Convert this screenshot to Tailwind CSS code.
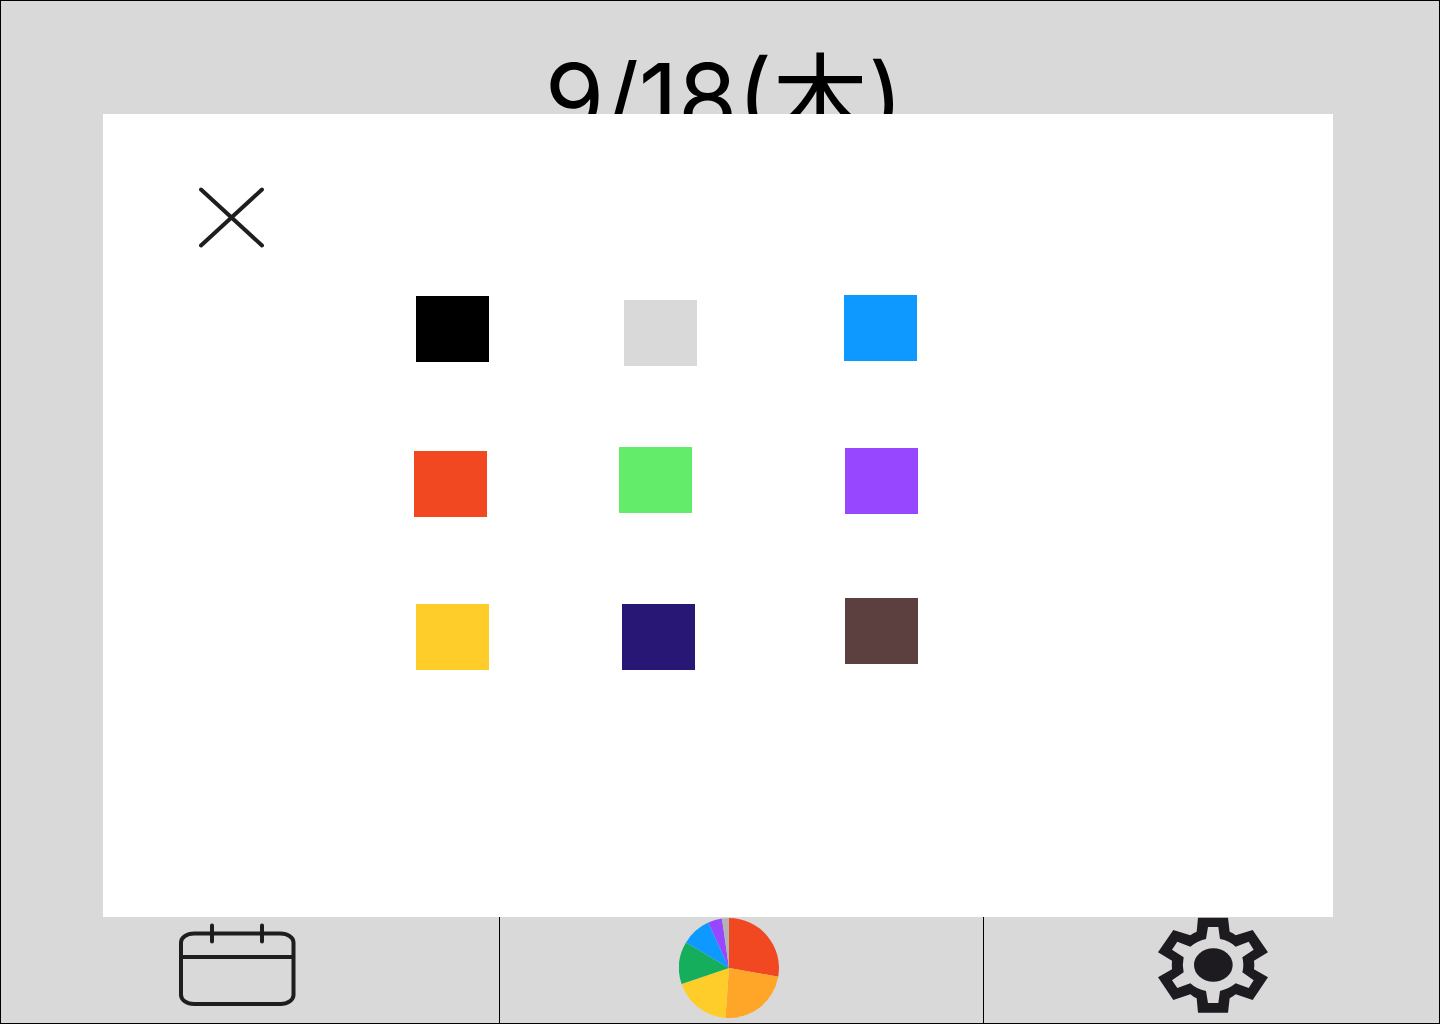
<!DOCTYPE html>
<html lang="ja">
<head>
<meta charset="utf-8">
<meta name="viewport" content="width=device-width, initial-scale=1">
<title>9/18(木)</title>
<script src="https://cdn.jsdelivr.net/npm/@tailwindcss/browser@4"></script>
</head>
<body class="font-['Inter','Noto_Sans_CJK_JP',sans-serif]">
<div class="relative flex min-h-screen flex-col border border-black bg-[#d9d9d9] text-black">
  <header class="flex justify-center pt-[49px] pl-2">
    <h1 class="text-8xl leading-none">9/18(木)</h1>
  </header>

  <nav class="mt-auto grid h-30 grid-cols-[499fr_484fr_455fr]">
    <a href="#calendar" aria-label="カレンダー" class="flex items-end justify-center border-r border-black pr-[26px] pb-4">
      <svg class="h-[84px] w-[118px]" viewBox="0 0 118 84" fill="none" stroke="#1e1e1e" stroke-width="4" stroke-linecap="round">
        <rect x="3" y="10.500" width="112.500" height="70.500" rx="13" ry="9"/>
        <path d="M3 34H115M34 2.500V18.500M84 2.500V18.500"/>
      </svg>
    </a>
    <a href="#chart" aria-label="グラフ" class="flex items-end justify-center border-r border-black pr-[26px] pb-[5px]">
      <svg class="size-[100px]" viewBox="0 0 100 100">
        <path fill="#f24822" d="M50 50V0A50 50 0 0 1 99.200 58.700Z"/>
        <path fill="#ffa629" d="M50 50L99.200 58.700A50 50 0 0 1 46.500 99.900Z"/>
        <path fill="#ffcd29" d="M50 50L46.500 99.900A50 50 0 0 1 2.600 66Z"/>
        <path fill="#14ae5c" d="M50 50L2.600 66A50 50 0 0 1 7 24.400Z"/>
        <path fill="#0d99ff" d="M50 50L7 24.400A50 50 0 0 1 29.300 4.500Z"/>
        <path fill="#9747ff" d="M50 50L29.300 4.500A50 50 0 0 1 43 .5Z"/>
        <path fill="#b3b3b3" d="M50 50L43 .5A50 50 0 0 1 50 0Z"/>
      </svg>
    </a>
    <a href="#settings" aria-label="設定" class="flex items-end justify-center pb-[10px] pl-0.5">
      <svg class="h-24 w-28" viewBox="36 36 336 288" fill="#1d1b20">
        <path fill-rule="evenodd" d="M159 38H249L254 80Q264 84 272 91L323 75L369 142L327 167Q329 180 327 193L369 217L323 285L272 268Q264 275 254 280L249 323H159L155 280Q145 276 136 268L85 285L39 217L81 193Q80 180 81 167L39 142L85 75L136 91Q145 84 155 80ZM189 66L183 102Q155 109 136 125L97 110L81 134L116 157Q111 180 116 202L81 226L97 249L136 235Q155 253 183 258L189 294H220L225 258Q253 251 272 235L311 249L326 226L292 202Q298 180 292 157L326 134L311 110L272 125Q253 107 225 102L220 66Z"/>
        <ellipse cx="205" cy="180" rx="58" ry="50"/>
      </svg>
    </a>
  </nav>

  <div role="dialog" aria-label="色を選択" class="absolute top-[113px] right-[106px] bottom-[106px] left-[102px] bg-white">
    <div class="flex items-start pl-24">
      <button type="button" aria-label="閉じる" class="mt-[73px]">
        <svg class="h-[61px] w-[66px]" viewBox="0 0 66 61" fill="none" stroke="#1e1e1e" stroke-width="4" stroke-linecap="round"><path d="M2 2.500L63 58.500M63 2.500L2 58.500"/></svg>
      </button>
      <div class="ml-[149px] flex w-[75px] flex-col items-end">
        <button type="button" aria-label="黒" class="mt-[182px] h-[66px] w-[73px] bg-black"></button>
        <button type="button" aria-label="赤" class="mt-[89px] h-[66px] w-[73px] self-start bg-[#f24822]"></button>
        <button type="button" aria-label="黄" class="mt-[87px] h-[66px] w-[73px] bg-[#ffcd29]"></button>
      </div>
      <div class="ml-[130px] flex w-[78px] flex-col items-center">
        <button type="button" aria-label="灰" class="mt-[186px] h-[66px] w-[73px] self-end bg-[#d9d9d9]"></button>
        <button type="button" aria-label="緑" class="mt-[81px] h-[66px] w-[73px] self-start bg-[#62ec69]"></button>
        <button type="button" aria-label="紺" class="mt-[91px] h-[66px] w-[73px] bg-[#281774]"></button>
      </div>
      <div class="ml-[147px] flex w-[74px] flex-col items-end">
        <button type="button" aria-label="青" class="mt-[181px] h-[66px] w-[73px] self-start bg-[#0d99ff]"></button>
        <button type="button" aria-label="紫" class="mt-[87px] h-[66px] w-[73px] bg-[#9747ff]"></button>
        <button type="button" aria-label="茶" class="mt-[84px] h-[66px] w-[73px] bg-[#5c4040]"></button>
      </div>
    </div>
  </div>
</div>
</body>
</html>
